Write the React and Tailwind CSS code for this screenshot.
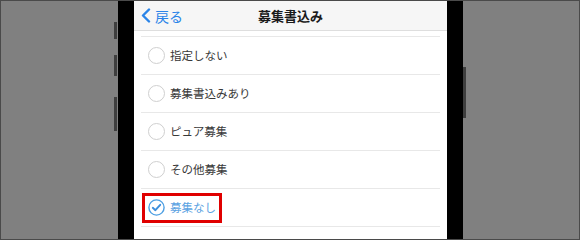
import React from "react";

const font = { fontFamily: '"Noto Sans CJK JP", "Noto Sans", sans-serif' };

function Circle({ checked }) {
  if (checked) {
    return (
      <svg width="17" height="17" viewBox="0 0 17 17" className="shrink-0">
        <circle cx="8.5" cy="8.5" r="7.6" fill="none" stroke="#4d9fe3" strokeWidth="1.4" />
        <polyline points="4.8,8.8 7.4,11.2 12.2,5.8" fill="none" stroke="#3d8fdc" strokeWidth="1.9" strokeLinecap="round" strokeLinejoin="round" />
      </svg>
    );
  }
  return <div className="w-[17px] h-[17px] shrink-0 rounded-full border border-[#cfcfcf] bg-white" />;
}

const items = [
  { label: "指定しない" },
  { label: "募集書込みあり" },
  { label: "ピュア募集" },
  { label: "その他募集" },
  { label: "募集なし", checked: true },
];

export default function App() {
  return (
    <div className="w-[580px] h-[240px] bg-[#808080] border border-[#4a4a4a] flex overflow-hidden" style={font}>
      {/* left gray with side buttons */}
      <div className="w-[117px] h-full flex flex-col items-end">
        <div className="mt-[21px] w-[3px] h-[17px] bg-[#3e3e3e] mr-[1px]" />
        <div className="mt-[16px] w-[3px] h-[21px] bg-[#3e3e3e] mr-[1px]" />
        <div className="mt-[21px] w-[3px] h-[34px] bg-[#3e3e3e] mr-[1px]" />
      </div>
      {/* left bezel */}
      <div className="w-[16px] h-full bg-black" />
      {/* screen */}
      <div className="w-[313px] h-full bg-white flex flex-col">
        <div className="h-[30px] bg-[#f6f6f6] border-b border-[#dedede] flex items-center relative">
          <div className="flex items-center pl-[7px] gap-[4px] text-[#2a84e8] text-[14px]">
            <svg width="10" height="15" viewBox="0 0 10 15">
              <polyline points="8,1.5 2,7.5 8,13.5" fill="none" stroke="#2a84e8" strokeWidth="2.4" strokeLinecap="round" strokeLinejoin="round" />
            </svg>
            <span className="leading-none">戻る</span>
          </div>
          <div className="absolute inset-0 flex items-center justify-center text-[13px] font-bold text-[#1a1a1a]">
            募集書込み
          </div>
        </div>
        <div className="mt-[5px] mx-[7px] border-b border-[#e8e8e8]">
          {items.map((it) => (
            <div key={it.label} className="h-[38px] border-t border-[#e8e8e8] flex items-center pl-[1px]">
              <div
                className={
                  "flex items-center gap-[5px] border-[3px] pl-[3px] pr-[3px] h-[30px] " +
                  (it.checked ? "border-[#e00000]" : "border-transparent")
                }
              >
                <Circle checked={it.checked} />
                <span className={"text-[11.5px] leading-none " + (it.checked ? "text-[#5aa2e2]" : "text-[#383838]")}>
                  {it.label}
                </span>
              </div>
            </div>
          ))}
        </div>
      </div>
      {/* right bezel */}
      <div className="w-[16px] h-full bg-black" />
      {/* right gray */}
      <div className="flex-1 h-full flex flex-col items-start">
        <div className="mt-[66px] w-[3px] h-[51px] bg-[#3e3e3e]" />
      </div>
    </div>
  );
}
